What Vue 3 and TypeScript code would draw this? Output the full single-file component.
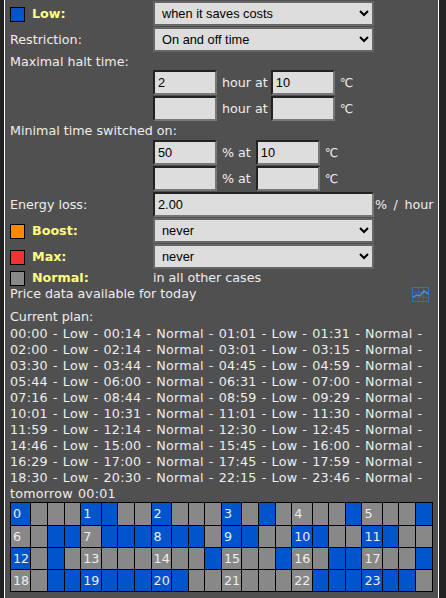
<script setup lang="ts">
const pattern = '1000 1100 1000 1010 0001 0001 0011 0111 1110 1100 1100 1100 1010 0000 0001 0001 0011 0001 0011 1111 1100 0000 0111 1110'.split(' ');
const cells = pattern.flatMap((bits, hour) =>
  bits.split('').map((b, i) => ({ id: `${hour}-${i}`, on: b === '1', label: i === 0 ? String(hour) : '' })),
);
const plan = `00:00 - Low - 00:14 - Normal - 01:01 - Low - 01:31 - Normal -
02:00 - Low - 02:14 - Normal - 03:01 - Low - 03:15 - Normal -
03:30 - Low - 03:44 - Normal - 04:45 - Low - 04:59 - Normal -
05:44 - Low - 06:00 - Normal - 06:31 - Low - 07:00 - Normal -
07:16 - Low - 08:44 - Normal - 08:59 - Low - 09:29 - Normal -
10:01 - Low - 10:31 - Normal - 11:01 - Low - 11:30 - Normal -
11:59 - Low - 12:14 - Normal - 12:30 - Low - 12:45 - Normal -
14:46 - Low - 15:00 - Normal - 15:45 - Low - 16:00 - Normal -
16:29 - Low - 17:00 - Normal - 17:45 - Low - 17:59 - Normal -
18:30 - Low - 20:30 - Normal - 22:15 - Low - 23:46 - Normal -
tomorrow 00:01`.split('\n');
</script>

<template>
  <div class="panel">
    <div class="row">
      <div class="lab"><span class="sw blue"></span><b>Low:</b></div>
      <select class="sel"><option>when it saves costs</option></select>
    </div>
    <div class="row">
      <div class="lab">Restriction:</div>
      <select class="sel"><option>On and off time</option></select>
    </div>
    <div class="line first">Maximal halt time:</div>
    <div class="row ind"><input class="num" value="2" /><span class="u">hour at</span><input class="num" value="10" /><span class="c">℃</span></div>
    <div class="row ind"><input class="num" /><span class="u">hour at</span><input class="num" /><span class="c">℃</span></div>
    <div class="line">Minimal time switched on:</div>
    <div class="row ind"><input class="num" value="50" /><span class="u p">% at</span><input class="num" value="10" /><span class="c">℃</span></div>
    <div class="row ind"><input class="num" /><span class="u p">% at</span><input class="num" /><span class="c">℃</span></div>
    <div class="row">
      <div class="lab">Energy loss:</div>
      <input class="wide" value="2.00" /><span class="pct">% / hour</span>
    </div>
    <div class="row">
      <div class="lab"><span class="sw orange"></span><b>Boost:</b></div>
      <select class="sel"><option>never</option></select>
    </div>
    <div class="row">
      <div class="lab"><span class="sw red"></span><b>Max:</b></div>
      <select class="sel"><option>never</option></select>
    </div>
    <div class="row normal">
      <div class="lab"><span class="sw grey"></span><b>Normal:</b></div>
      <span>in all other cases</span>
    </div>
    <div class="price">
      <span>Price data available for today</span>
      <svg class="chart" width="17" height="15" viewBox="0 0 17 15" fill="none" stroke="#2f6fd0">
        <rect x="0.5" y="0.5" width="16" height="14" />
        <path d="M0 5.5H17M0 10.5H17M6.5 0V15M11.5 0V15" stroke-opacity="0.6" />
        <path d="M1 10L5 8L8 9L12 4L16 7" stroke="#3aa0e0" stroke-width="1.3" />
      </svg>
    </div>
    <div class="line cur">Current plan:</div>
    <div class="plan">
      <div v-for="l in plan" :key="l">{{ l }}</div>
    </div>
    <div class="grid">
      <div v-for="c in cells" :key="c.id" class="cell" :class="c.on ? 'on' : 'off'">{{ c.label }}</div>
    </div>
  </div>
</template>

<style>
html, body { background: #222; }
</style>

<style scoped>
.panel {
  box-sizing: border-box;
  width: 435px;
  height: 598px;
  margin-left: 4px;
  padding: 1px 0 0 5px;
  background: #505050;
  border-left: 1px solid #fff;
  border-right: 1px solid #fff;
  color: #eee;
  font: 12.7px/18px "DejaVu Sans", sans-serif;
  overflow: hidden;
}
.row { display: flex; align-items: center; height: 26px; }
.ind { padding-left: 143px; }
.row > input, .row > select { align-self: flex-start; }
.lab { width: 143px; display: flex; align-items: center; }
.lab b { color: #ffff80; margin-left: 7px; }
.sw { box-sizing: border-box; width: 15px; height: 15px; border: 1px solid #000; }
.blue { background: #0055cc; }
.orange { background: #ff8800; }
.red { background: #ee3333; }
.grey { background: #888; }
.sel, .num, .wide {
  box-sizing: border-box;
  background: #ddd;
  color: #000;
  font: 12.8px "Liberation Sans", Arial, sans-serif;
  border: 2px solid #666;
  border-radius: 0;
  height: 25px;
}
.sel { width: 221px; padding: 0 0 0 3px; }
.num, .wide { border-color: #222 #777 #777 #222; padding: 1px 3px; outline: none; }
.num { width: 64px; }
.wide { width: 221px; }
.u { margin: 0 3px 0 5px; }
.u.p { margin-right: 5px; }
.c { margin-left: 5px; font-size: 12px; }
.pct { margin-left: 1px; word-spacing: 2.5px; }
.normal { height: 16px; }
.price { display: flex; justify-content: space-between; align-items: center; height: 16px; padding-right: 9px; }
.line { height: 18px; }
.line.first { height: 17px; }
.cur { margin-top: 6px; }
.plan { line-height: 16px; letter-spacing: 0.25px; word-spacing: 0.8px; }
.grid {
  display: grid;
  grid-template-columns: repeat(6, 19.33px 15.67px 15.67px 15.67px);
  grid-template-rows: 22px 21px 21px 21px;
  gap: 1px;
  width: 423px;
  box-sizing: border-box;
  padding: 1px;
  background: #000;
}
.cell { padding-left: 2px; line-height: 21px; color: #eee; overflow: hidden; white-space: nowrap; }
.on { background: #0055cc; }
.off { background: #888; }
</style>
